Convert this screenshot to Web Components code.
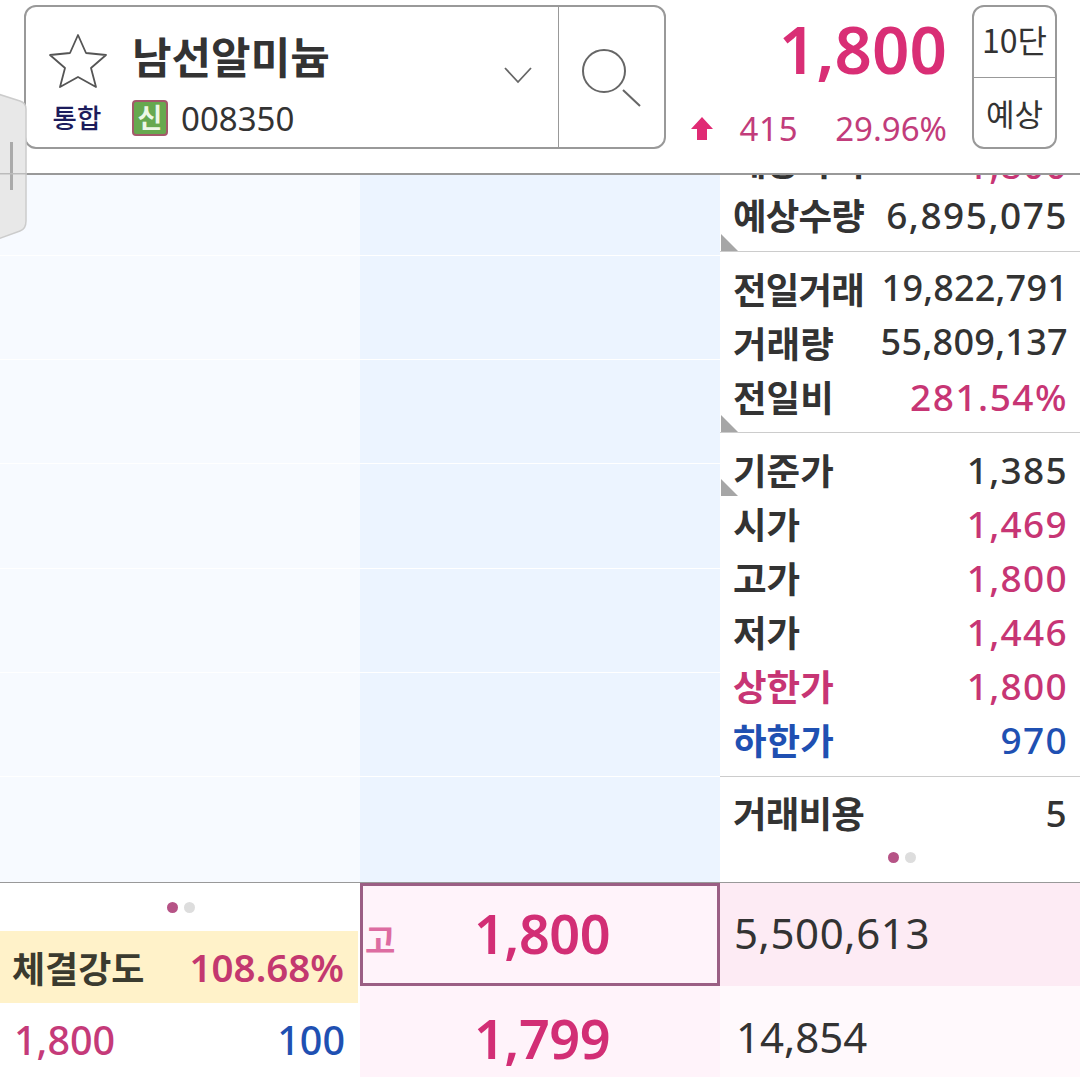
<!DOCTYPE html>
<html lang="ko">
<head>
<meta charset="utf-8">
<title>남선알미늄</title>
<style>
  html, body { margin: 0; padding: 0; background: #fff; }
  body {
    width: 1080px;
    height: 1077px;
    overflow: hidden;
    position: relative;
    font-family: "Noto Sans", "Noto Sans CJK KR", sans-serif;
    color: #333;
  }
</style>
</head>
<body>
  <side-handle></side-handle>
  <stock-header></stock-header>
  <order-book>
    <info-panel slot="info"></info-panel>
  </order-book>
  <quote-footer></quote-footer>

<script>
const headerTemplate = document.createElement('template');
headerTemplate.innerHTML = `
  <style>
    :host {
      display: flex;
      box-sizing: border-box;
      padding: 5px 23px 0 24px;
      border-bottom: 2px solid #999;
      height: 175px;
      background: #fff;
    }
    #search-box {
      display: flex;
      width: 642px;
      height: 144px;
      box-sizing: border-box;
      border: 2px solid #999;
      border-radius: 12px;
    }
    #stock {
      flex: 1;
      display: grid;
      grid-template-columns: 107px 1fr 78px;
      grid-template-rows: 90px 1fr;
      align-items: center;
    }
    #star { justify-self: center; margin-top: 18px; margin-left: -3px; }
    #name { font: 700 43px "Noto Sans CJK KR", sans-serif; color: #333; line-height: 1; margin-top: 6px; margin-left: -1px; }
    #chevron { justify-self: center; margin-top: 46px; margin-left: -2px; }
    #market { justify-self: center; font: 500 26.5px "Noto Sans CJK KR", sans-serif; color: #1c1c5c; line-height: 1; margin-top: -10px; margin-right: 5px; }
    #code-row { display: flex; align-items: center; gap: 13px; margin-top: -8px; margin-left: -1px; }
    #badge {
      width: 36px;
      height: 36px;
      box-sizing: border-box;
      border: 2.5px solid #a3596a;
      border-radius: 4px;
      background: #67a84f;
      color: #eef7e6;
      font: 700 27px/30px "Noto Sans CJK KR", sans-serif;
      text-align: center;
    }
    #code { font-size: 33px; line-height: 1; color: #333; }
    #search-btn {
      width: 106px;
      border-left: 1px solid #999;
      display: flex;
      align-items: center;
      justify-content: center;
      padding: 4px 0 0 2px;
      box-sizing: border-box;
    }
    #price {
      flex: 1;
      display: flex;
      flex-direction: column;
      align-items: flex-end;
      padding-right: 25px;
    }
    #last {
      font-size: 65.5px;
      font-weight: 600;
      line-height: 1;
      color: #d92e75;
      margin-top: 11px;
    }
    #change {
      display: flex;
      align-items: center;
      font-size: 33px;
      line-height: 1;
      color: #c23c7b;
      margin-top: 30px;
    }
    #change svg { margin-right: 26px; }
    #change b { font-weight: 400; letter-spacing: .7px; margin-right: 37px; }
    #mode {
      width: 85px;
      height: 144px;
      box-sizing: border-box;
      border: 2px solid #999;
      border-radius: 12px;
      display: grid;
      grid-template-rows: 1fr 1fr;
      font: 400 31px "Noto Sans CJK KR", sans-serif;
      color: #333;
      text-align: center;
      align-items: center;
    }
    #mode div:first-child { border-bottom: 1px solid #999; height: 100%; line-height: 65px; font-size: 32px; }
    #mode div:last-child { line-height: 1; }
  </style>
  <div id="search-box">
    <div id="stock">
      <svg id="star" width="60" height="56" viewBox="0 0 60 56" fill="none" stroke="#555" stroke-width="1.8" stroke-linejoin="round">
        <path d="M30 2 L38 20 L58 22 L43 35 L48 54 L30 44 L12 54 L17 35 L2 22 L22 20 Z"/>
      </svg>
      <div id="name">남선알미늄</div>
      <svg id="chevron" width="30" height="18" viewBox="0 0 30 18" fill="none" stroke="#666" stroke-width="1.8">
        <path d="M2 2 L15 16 L28 2"/>
      </svg>
      <div id="market">통합</div>
      <div id="code-row"><div id="badge">신</div><div id="code">008350</div></div>
    </div>
    <div id="search-btn">
      <svg width="62" height="62" viewBox="0 0 62 62" fill="none" stroke="#666" stroke-width="2">
        <circle cx="22" cy="23" r="21"/>
        <path d="M41 42 L58 58"/>
      </svg>
    </div>
  </div>
  <div id="price">
    <div id="last">1,800</div>
    <div id="change">
      <svg width="22" height="24" viewBox="0 0 22 24"><path fill="#e02b74" d="M11 1 L22 13 L16 13 L16 24 L6 24 L6 13 L0 13 Z"/></svg>
      <b>415</b><span>29.96%</span>
    </div>
  </div>
  <div id="mode"><div>10단</div><div>예상</div></div>
`;

class StockHeader extends HTMLElement {
  constructor() {
    super();
    this.attachShadow({ mode: 'open' });
    this.shadowRoot.appendChild(headerTemplate.content.cloneNode(true));
  }
}

const bookTemplate = document.createElement('template');
bookTemplate.innerHTML = `
  <style>
    :host {
      display: grid;
      grid-template-columns: 360px 360px 360px;
      height: 707px;
      overflow: hidden;
    }
    .col {
      display: grid;
      grid-template-rows: 81px 104px 104px 105px 104px 104px 1fr;
    }
    .col div { border-bottom: 1px solid #fff; }
    .col div:last-child { border-bottom: 0; }
    #ask { background: #f7faff; }
    #bid { background: #ecf4ff; }
    #info { overflow: hidden; }
  </style>
  <div id="ask" class="col"><div></div><div></div><div></div><div></div><div></div><div></div><div></div></div>
  <div id="bid" class="col"><div></div><div></div><div></div><div></div><div></div><div></div><div></div></div>
  <div id="info"><slot name="info"></slot></div>
`;

class OrderBook extends HTMLElement {
  constructor() {
    super();
    this.attachShadow({ mode: 'open' });
    this.shadowRoot.appendChild(bookTemplate.content.cloneNode(true));
  }
}

const rowTemplate = document.createElement('template');
rowTemplate.innerHTML = `
  <style>
    :host {
      display: flex;
      justify-content: space-between;
      align-items: center;
      box-sizing: border-box;
      height: 54px;
      padding: 0 13px 4px;
      line-height: 1;
      color: #333;
    }
    #label { font: 700 36.5px "Noto Sans CJK KR", sans-serif; letter-spacing: var(--label-spacing, 0); color: var(--label-color, #333); }
    #value { font-size: var(--value-size, 37px); letter-spacing: var(--value-spacing, 1.3px); margin: var(--value-top, 0) -1px 0 0; color: var(--value-color, #333); font-weight: var(--value-weight, 500); }
  </style>
  <span id="label"><slot name="label"></slot></span>
  <span id="value"><slot></slot></span>
`;

class InfoRow extends HTMLElement {
  constructor() {
    super();
    this.attachShadow({ mode: 'open' });
    this.shadowRoot.appendChild(rowTemplate.content.cloneNode(true));
  }
}

const panelTemplate = document.createElement('template');
panelTemplate.innerHTML = `
  <style>
    :host { display: flex; flex-direction: column; margin-top: -40px; background: #fff; }
    section { position: relative; border-bottom: 1px solid #ccc; }
    section:last-of-type { border-bottom: 0; }
    #s1 { padding-bottom: 8px; }
    #s2 { padding: 11px 0 7px; }
    #s3 { padding: 11px 0 8px; }
    #s4 { padding-top: 10px; }
    .corner {
      position: absolute;
      left: 1px;
      width: 17px;
      height: 17px;
      background: #a6a6a6;
      clip-path: polygon(0 0, 100% 100%, 0 100%);
    }
    .pink { --value-color: #c73574; }
    .blue { --value-color: #1f50b2; --label-color: #1f50b2; }
    .wide { --label-spacing: -.8px; }
    #dots { display: flex; justify-content: center; gap: 6px; margin-top: 11px; padding-left: 3px; }
    #dots i { width: 11px; height: 11px; border-radius: 50%; background: #ddd; }
    #dots i:first-child { background: #b65386; }
  </style>
  <section id="s1">
    <info-row class="pink wide" style="--value-top:8px"><span slot="label">예상가격</span>1,800</info-row>
    <info-row class="wide" style="--value-spacing:1.5px"><span slot="label">예상수량</span>6,895,075</info-row>
    <span class="corner" style="bottom:0"></span>
  </section>
  <section id="s2">
    <info-row class="wide" style="--value-size:36px;--value-spacing:.2px"><span slot="label">전일거래</span>19,822,791</info-row>
    <info-row style="--value-size:36px;--value-spacing:.3px"><span slot="label">거래량</span>55,809,137</info-row>
    <info-row class="pink" style="--value-spacing:1.5px"><span slot="label">전일비</span>281.54%</info-row>
    <span class="corner" style="bottom:0"></span>
  </section>
  <section id="s3">
    <info-row><span slot="label">기준가</span>1,385</info-row>
    <info-row class="pink"><span slot="label">시가</span>1,469</info-row>
    <info-row class="pink"><span slot="label">고가</span>1,800</info-row>
    <info-row class="pink"><span slot="label">저가</span>1,446</info-row>
    <info-row class="pink" style="--label-color:#c73574"><span slot="label">상한가</span>1,800</info-row>
    <info-row class="blue"><span slot="label">하한가</span>970</info-row>
    <span class="corner" style="top:46px"></span>
  </section>
  <section id="s4">
    <info-row class="wide"><span slot="label">거래비용</span>5</info-row>
    <div id="dots"><i></i><i></i></div>
  </section>
`;

class InfoPanel extends HTMLElement {
  constructor() {
    super();
    this.attachShadow({ mode: 'open' });
    this.shadowRoot.appendChild(panelTemplate.content.cloneNode(true));
  }
}

const footerTemplate = document.createElement('template');
footerTemplate.innerHTML = `
  <style>
    :host {
      display: grid;
      grid-template-columns: 360px 360px 360px;
      grid-template-rows: 103px 104px;
      border-top: 1px solid #999;
      box-sizing: border-box;
      height: 195px;
      overflow: hidden;
      line-height: 1;
    }
    #trade { grid-row: 1 / 3; display: flex; flex-direction: column; padding-right: 2px; }
    #dots { display: flex; justify-content: center; gap: 6px; height: 48px; padding: 19px 0 0 3px; box-sizing: border-box; }
    #dots i { width: 11px; height: 11px; border-radius: 50%; background: #ddd; }
    #dots i:first-child { background: #b65386; }
    #strength {
      display: flex;
      justify-content: space-between;
      align-items: center;
      height: 72px;
      padding: 0 14px 0 12px;
      background: #fff2c9;
    }
    #strength span { font: 700 36px "Noto Sans CJK KR", sans-serif; color: #3b3b2f; }
    #strength b { font-size: 38.5px; font-weight: 600; color: #c3386f; }
    #tick {
      display: flex;
      justify-content: space-between;
      align-items: center;
      height: 76px;
      padding: 0 13px 0 14px;
      font-size: 39.5px;
      font-weight: 500;
      color: #c53a79;
    }
    #tick b { font-weight: 500; color: #1f50b2; }
    .price {
      position: relative;
      display: flex;
      align-items: center;
      justify-content: center;
      background: #fff3fa;
      box-sizing: border-box;
      font-size: 54px;
      font-weight: 600;
      letter-spacing: -.5px;
      color: #d22e75;
      padding: 0 0 0 4px;
    }
    #high { border: 3px solid #9b5e84; padding-bottom: 4px; }
    #high small {
      position: absolute;
      left: 2px;
      top: 29px;
      font: 700 33px "Noto Sans CJK KR", sans-serif;
      letter-spacing: 0;
      color: #dd6ca1;
    }
    .qty {
      display: flex;
      align-items: center;
      font-size: 42px;
      letter-spacing: .6px;
      color: #333;
      padding: 0 0 3px 14px;
    }
    #qty1 { background: #fdebf4; }
    #qty2 { background: #fff9fc; padding-left: 16px; letter-spacing: 0; }
  </style>
  <div id="trade">
    <div id="dots"><i></i><i></i></div>
    <div id="strength"><span>체결강도</span><b>108.68%</b></div>
    <div id="tick">1,800<b>100</b></div>
  </div>
  <div id="high" class="price"><small>고</small>1,800</div>
  <div id="qty1" class="qty">5,500,613</div>
  <div class="price">1,799</div>
  <div id="qty2" class="qty">14,854</div>
`;

class QuoteFooter extends HTMLElement {
  constructor() {
    super();
    this.attachShadow({ mode: 'open' });
    this.shadowRoot.appendChild(footerTemplate.content.cloneNode(true));
  }
}

const handleTemplate = document.createElement('template');
handleTemplate.innerHTML = `
  <style>
    :host { position: absolute; left: 0; top: 93px; z-index: 5; display: block; width: 28px; height: 147px; }
  </style>
  <svg width="28" height="147" viewBox="0 0 28 147">
    <path d="M-2 1 L20 8 Q26 10 26 16 L26 128 Q26 136 20 138 L-2 146 Z" fill="#e8e8e8" stroke="#ccc" stroke-width="1.5"/>
    <rect x="10" y="49" width="3" height="48" fill="#aaa"/>
    <rect x="0" y="80" width="26" height="1.5" fill="#bbb"/>
  </svg>
`;

class SideHandle extends HTMLElement {
  constructor() {
    super();
    this.attachShadow({ mode: 'open' });
    this.shadowRoot.appendChild(handleTemplate.content.cloneNode(true));
  }
}

customElements.define('stock-header', StockHeader);
customElements.define('order-book', OrderBook);
customElements.define('info-row', InfoRow);
customElements.define('info-panel', InfoPanel);
customElements.define('quote-footer', QuoteFooter);
customElements.define('side-handle', SideHandle);
</script>
</body>
</html>
